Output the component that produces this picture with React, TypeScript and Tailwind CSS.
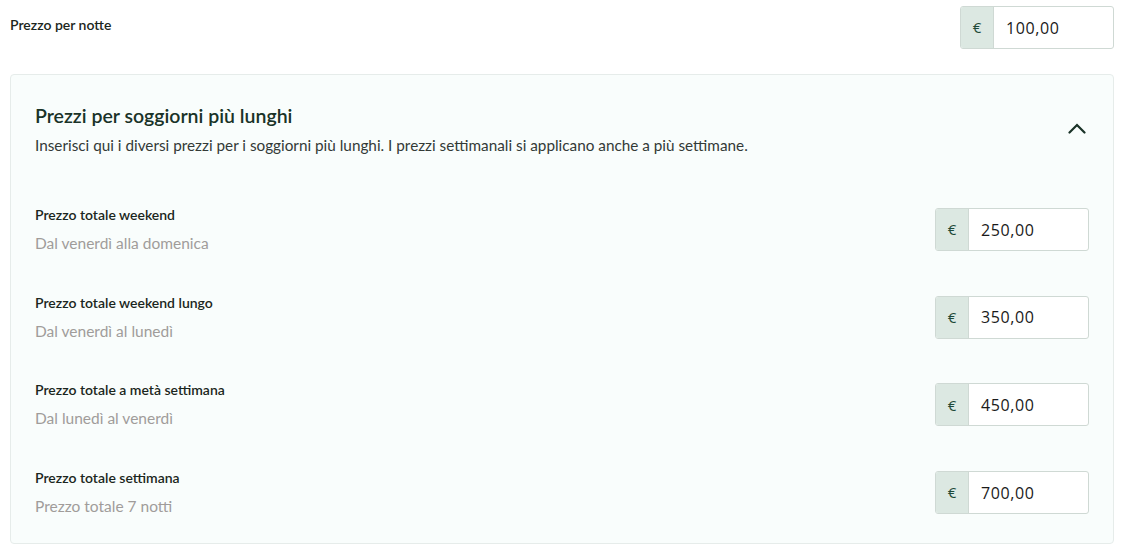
import React from "react";

function PriceInput({ value }: { value: string }) {
  return (
    <div className="flex h-[43px] w-[154px] shrink-0 overflow-hidden rounded-[3px] border border-[#cfd9d4] bg-white">
      <div className="flex w-[32px] items-center justify-center bg-[#dce8e2] text-[15px] text-[#1e4a38] [font-family:'Open_Sans',sans-serif]">
        €
      </div>
      <div className="flex flex-1 items-center border-l border-[#cfd9d4] pl-[12px] text-[16px] tracking-[0.6px] text-[#1a1a1a] [font-family:'Open_Sans',sans-serif]">
        {value}
      </div>
    </div>
  );
}

const rows = [
  { label: "Prezzo totale weekend", sub: "Dal venerdì alla domenica", value: "250,00" },
  { label: "Prezzo totale weekend lungo", sub: "Dal venerdì al lunedì", value: "350,00" },
  { label: "Prezzo totale a metà settimana", sub: "Dal lunedì al venerdì", value: "450,00" },
  { label: "Prezzo totale settimana", sub: "Prezzo totale 7 notti", value: "700,00" },
];

export default function App() {
  return (
    <div className="h-[551px] w-[1122px] bg-white pl-[10px] pr-[8px] pt-[6px] [font-family:Lato,sans-serif]">
      <div className="flex items-start justify-between">
        <div className="pt-[9px] text-[14px] font-semibold leading-[20px] text-[#1b2620]">Prezzo per notte</div>
        <PriceInput value="100,00" />
      </div>
      <div className="mt-[25px] rounded-[4px] border border-[#e6ecea] bg-[#f9fdfc] pb-[26px] pl-[24px] pr-[24px] pt-[27px]">
        <div className="flex items-center justify-between">
          <div>
            <div className="text-[19.5px] font-semibold leading-[28px] text-[#1a3328]">
              Prezzi per soggiorni più lunghi
            </div>
            <div className="mt-[4px] text-[15.3px] leading-[22px] text-[#333a37]">
              Inserisci qui i diversi prezzi per i soggiorni più lunghi. I prezzi settimanali si applicano anche a più settimane.
            </div>
          </div>
          <svg width="18" height="11" viewBox="0 0 18 11" className="mr-[3px] mb-[2px]">
            <path d="M1.5 9.5 L9 2 L16.5 9.5" fill="none" stroke="#1a3328" strokeWidth="2.2" strokeLinecap="round" />
          </svg>
        </div>
        <div className="mt-[49px] flex flex-col gap-[38.7px]">
          {rows.map((r) => (
            <div key={r.label} className="flex items-start justify-between">
              <div>
                <div className="text-[14px] font-semibold leading-[20px] text-[#1b2620]">{r.label}</div>
                <div className="mt-[7px] text-[15.5px] leading-[22px] text-[#a09c9a]">{r.sub}</div>
              </div>
              <div className="mt-[3px]">
                <PriceInput value={r.value} />
              </div>
            </div>
          ))}
        </div>
      </div>
    </div>
  );
}
